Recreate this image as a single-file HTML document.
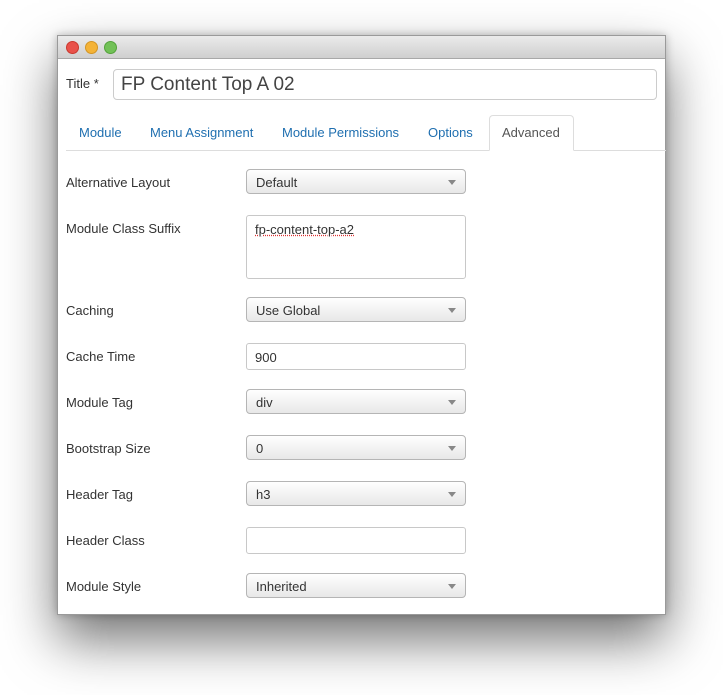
<!DOCTYPE html><html><head><style>
body{margin:0;width:723px;height:695px;background:#fff;font-family:"Liberation Sans",sans-serif;position:relative;overflow:hidden}
.win{position:absolute;left:57px;top:35px;width:609px;height:580px;background:#fff;border:1px solid #9a9a9a;box-sizing:border-box;box-shadow:0 25px 50px rgba(0,0,0,.55),0 0 8px rgba(0,0,0,.25)}
.bar{height:22px;background:linear-gradient(#ebebeb,#cfcfcf);border-bottom:1px solid #a8a8a8}
.dot{position:absolute;top:5px;width:11px;height:11px;border-radius:50%}
.a{position:absolute}
.lbl{position:absolute;left:66px;font-size:13px;color:#333}
.sel{position:absolute;left:246px;width:220px;height:25px;box-sizing:border-box;border:1px solid #b5b5b5;border-radius:4px;background:linear-gradient(#fff,#e8e8e8);font-size:13px;color:#333;padding:5px 9px}
.sel:after{content:"";position:absolute;right:9px;top:10px;border:4px solid transparent;border-top:5px solid #888}
.inp{position:absolute;left:246px;width:220px;box-sizing:border-box;border:1px solid #c8c8c8;border-radius:3px;background:#fff;font-size:13px;color:#333;padding:6px 8px}
.tab{position:absolute;top:125px;font-size:13px;color:#1f6fb0}
</style></head><body>
<div class="win"><div class="bar"></div>
<div class="dot" style="left:8px;background:#e9524a;border:1px solid #c9392f"></div>
<div class="dot" style="left:27px;background:#f4b337;border:1px solid #d39524"></div>
<div class="dot" style="left:46px;background:#72c157;border:1px solid #54a23b"></div>
</div>
<div class="lbl" style="top:76px;font-size:13px">Title *</div>
<div class="a" style="left:113px;top:69px;width:544px;height:31px;box-sizing:border-box;border:1px solid #ccc;border-radius:4px;font-size:19px;color:#444;padding:4px 7px">FP Content Top A 02</div>
<div class="a" style="left:66px;top:150px;width:600px;height:1px;background:#ddd"></div>
<div class="a" style="left:489px;top:115px;width:85px;height:36px;box-sizing:border-box;border:1px solid #ddd;border-bottom:1px solid #fff;border-radius:4px 4px 0 0;background:#fff"></div>
<div class="tab" style="left:79px">Module</div>
<div class="tab" style="left:150px">Menu Assignment</div>
<div class="tab" style="left:282px">Module Permissions</div>
<div class="tab" style="left:428px">Options</div>
<div class="tab" style="left:502px;color:#555">Advanced</div>
<div class="lbl" style="top:175px">Alternative Layout</div><div class="sel" style="top:169px">Default</div>
<div class="lbl" style="top:221px">Module Class Suffix</div>
<div class="inp" style="top:215px;height:64px"><span style="text-decoration:underline dotted #d33">fp-content-top-a2</span></div>
<div class="lbl" style="top:303px">Caching</div><div class="sel" style="top:297px">Use Global</div>
<div class="lbl" style="top:349px">Cache Time</div><div class="inp" style="top:343px;height:27px">900</div>
<div class="lbl" style="top:395px">Module Tag</div><div class="sel" style="top:389px">div</div>
<div class="lbl" style="top:441px">Bootstrap Size</div><div class="sel" style="top:435px">0</div>
<div class="lbl" style="top:487px">Header Tag</div><div class="sel" style="top:481px">h3</div>
<div class="lbl" style="top:533px">Header Class</div><div class="inp" style="top:527px;height:27px"></div>
<div class="lbl" style="top:579px">Module Style</div><div class="sel" style="top:573px">Inherited</div>
</body></html>
